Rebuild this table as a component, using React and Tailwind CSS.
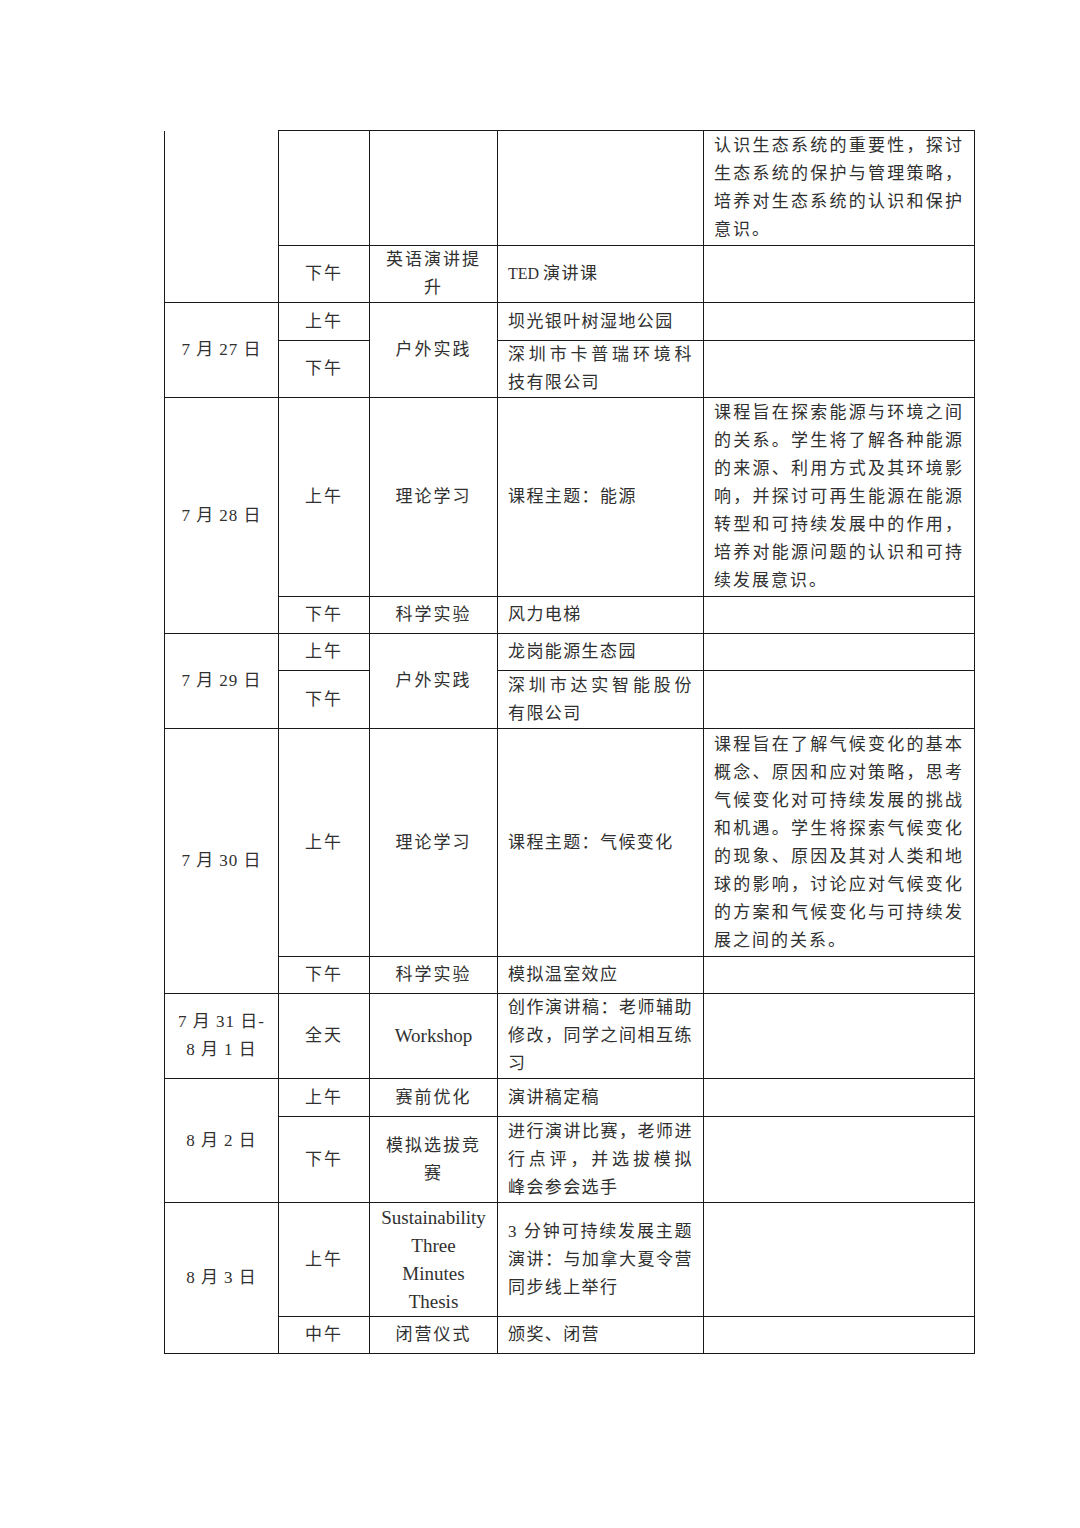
import React from "react";

const font = "font-['Liberation_Serif','Noto_Sans_CJK_SC',serif]";
const cell = "border border-[#1a1a1a] p-0 align-middle";

// one block per printed line; every line but the last is spread edge to edge
const Lines = ({ lines, className = "" }) => (
  <div className={className}>
    {lines.map((l, i) => (
      <div
        key={i}
        className={i < lines.length - 1 ? "text-justify [text-align-last:justify]" : ""}
      >
        {l}
      </div>
    ))}
  </div>
);

const Date = ({ children, rowSpan = 2, top = true }) => (
  <td
    rowSpan={rowSpan}
    className={`${cell} text-center tracking-[1px] ${top ? "" : "!border-t-0"}`}
  >
    {children}
  </td>
);

const Time = ({ children, rowSpan = 1 }) => (
  <td rowSpan={rowSpan} className={`${cell} text-center tracking-[2px]`}>
    {children}
  </td>
);

const Type = ({ children, rowSpan = 1 }) => (
  <td rowSpan={rowSpan} className={`${cell} text-center tracking-[2px] px-[10px]`}>
    {children}
  </td>
);

const Content = ({ lines }) => (
  <td className={`${cell} px-[10px] tracking-[1.4px]`}>
    {lines && <Lines lines={lines} />}
  </td>
);

const Desc = ({ lines }) => (
  <td className={`${cell} px-[10px] tracking-[2px]`}>
    {lines && <Lines lines={lines} />}
  </td>
);

const App = () => {
  return (
    <div className={`min-h-[1528px] bg-white pt-[130px] pl-[164px] ${font} text-[17px] leading-[28px] text-[#303030]`}>
      <table className="table-fixed border-collapse w-[810px]">
        <colgroup>
          <col className="w-[114px]" />
          <col className="w-[91px]" />
          <col className="w-[128px]" />
          <col className="w-[206px]" />
          <col className="w-[271px]" />
        </colgroup>
        <tbody>
          <tr className="h-[115px]">
            <Date top={false}></Date>
            <Time></Time>
            <Type></Type>
            <Content />
            <Desc
              lines={[
                "认识生态系统的重要性，探讨",
                "生态系统的保护与管理策略，",
                "培养对生态系统的认识和保护",
                "意识。",
              ]}
            />
          </tr>
          <tr className="h-[57px]">
            <Time>下午</Time>
            <Type>
              <div>英语演讲提</div>
              <div>升</div>
            </Type>
            <td className={`${cell} px-[10px] tracking-[1.4px]`}>
              <span className="tracking-normal text-[16px]">TED </span>演讲课
            </td>
            <Desc />
          </tr>

          <tr className="h-[38px]">
            <Date>7 月 27 日</Date>
            <Time>上午</Time>
            <Type rowSpan={2}>户外实践</Type>
            <Content lines={["坝光银叶树湿地公园"]} />
            <Desc />
          </tr>
          <tr className="h-[57px]">
            <Time>下午</Time>
            <Content lines={["深圳市卡普瑞环境科", "技有限公司"]} />
            <Desc />
          </tr>

          <tr className="h-[199px]">
            <Date>7 月 28 日</Date>
            <Time>上午</Time>
            <Type>理论学习</Type>
            <Content lines={["课程主题：能源"]} />
            <Desc
              lines={[
                "课程旨在探索能源与环境之间",
                "的关系。学生将了解各种能源",
                "的来源、利用方式及其环境影",
                "响，并探讨可再生能源在能源",
                "转型和可持续发展中的作用，",
                "培养对能源问题的认识和可持",
                "续发展意识。",
              ]}
            />
          </tr>
          <tr className="h-[37px]">
            <Time>下午</Time>
            <Type>科学实验</Type>
            <Content lines={["风力电梯"]} />
            <Desc />
          </tr>

          <tr className="h-[37px]">
            <Date>7 月 29 日</Date>
            <Time>上午</Time>
            <Type rowSpan={2}>户外实践</Type>
            <Content lines={["龙岗能源生态园"]} />
            <Desc />
          </tr>
          <tr className="h-[58px]">
            <Time>下午</Time>
            <Content lines={["深圳市达实智能股份", "有限公司"]} />
            <Desc />
          </tr>

          <tr className="h-[228px]">
            <Date>7 月 30 日</Date>
            <Time>上午</Time>
            <Type>理论学习</Type>
            <Content lines={["课程主题：气候变化"]} />
            <Desc
              lines={[
                "课程旨在了解气候变化的基本",
                "概念、原因和应对策略，思考",
                "气候变化对可持续发展的挑战",
                "和机遇。学生将探索气候变化",
                "的现象、原因及其对人类和地",
                "球的影响，讨论应对气候变化",
                "的方案和气候变化与可持续发",
                "展之间的关系。",
              ]}
            />
          </tr>
          <tr className="h-[37px]">
            <Time>下午</Time>
            <Type>科学实验</Type>
            <Content lines={["模拟温室效应"]} />
            <Desc />
          </tr>

          <tr className="h-[85px]">
            <Date rowSpan={1}>
              <div>7 月 31 日-</div>
              <div>8 月 1 日</div>
            </Date>
            <Time>全天</Time>
            <td className={`${cell} text-center text-[19px]`}>Workshop</td>
            <Content lines={["创作演讲稿：老师辅助", "修改，同学之间相互练", "习"]} />
            <Desc />
          </tr>

          <tr className="h-[38px]">
            <Date>8 月 2 日</Date>
            <Time>上午</Time>
            <Type>赛前优化</Type>
            <Content lines={["演讲稿定稿"]} />
            <Desc />
          </tr>
          <tr className="h-[86px]">
            <Time>下午</Time>
            <Type>
              <div>模拟选拔竞</div>
              <div>赛</div>
            </Type>
            <Content lines={["进行演讲比赛，老师进", "行点评，并选拔模拟", "峰会参会选手"]} />
            <Desc />
          </tr>

          <tr className="h-[114px]">
            <Date>8 月 3 日</Date>
            <Time>上午</Time>
            <td className={`${cell} text-center text-[19px]`}>
              <div>Sustainability</div>
              <div>Three</div>
              <div>Minutes</div>
              <div>Thesis</div>
            </td>
            <Content lines={["3 分钟可持续发展主题", "演讲：与加拿大夏令营", "同步线上举行"]} />
            <Desc />
          </tr>
          <tr className="h-[37px]">
            <Time>中午</Time>
            <Type>闭营仪式</Type>
            <Content lines={["颁奖、闭营"]} />
            <Desc />
          </tr>
        </tbody>
      </table>
    </div>
  );
};

export default App;
